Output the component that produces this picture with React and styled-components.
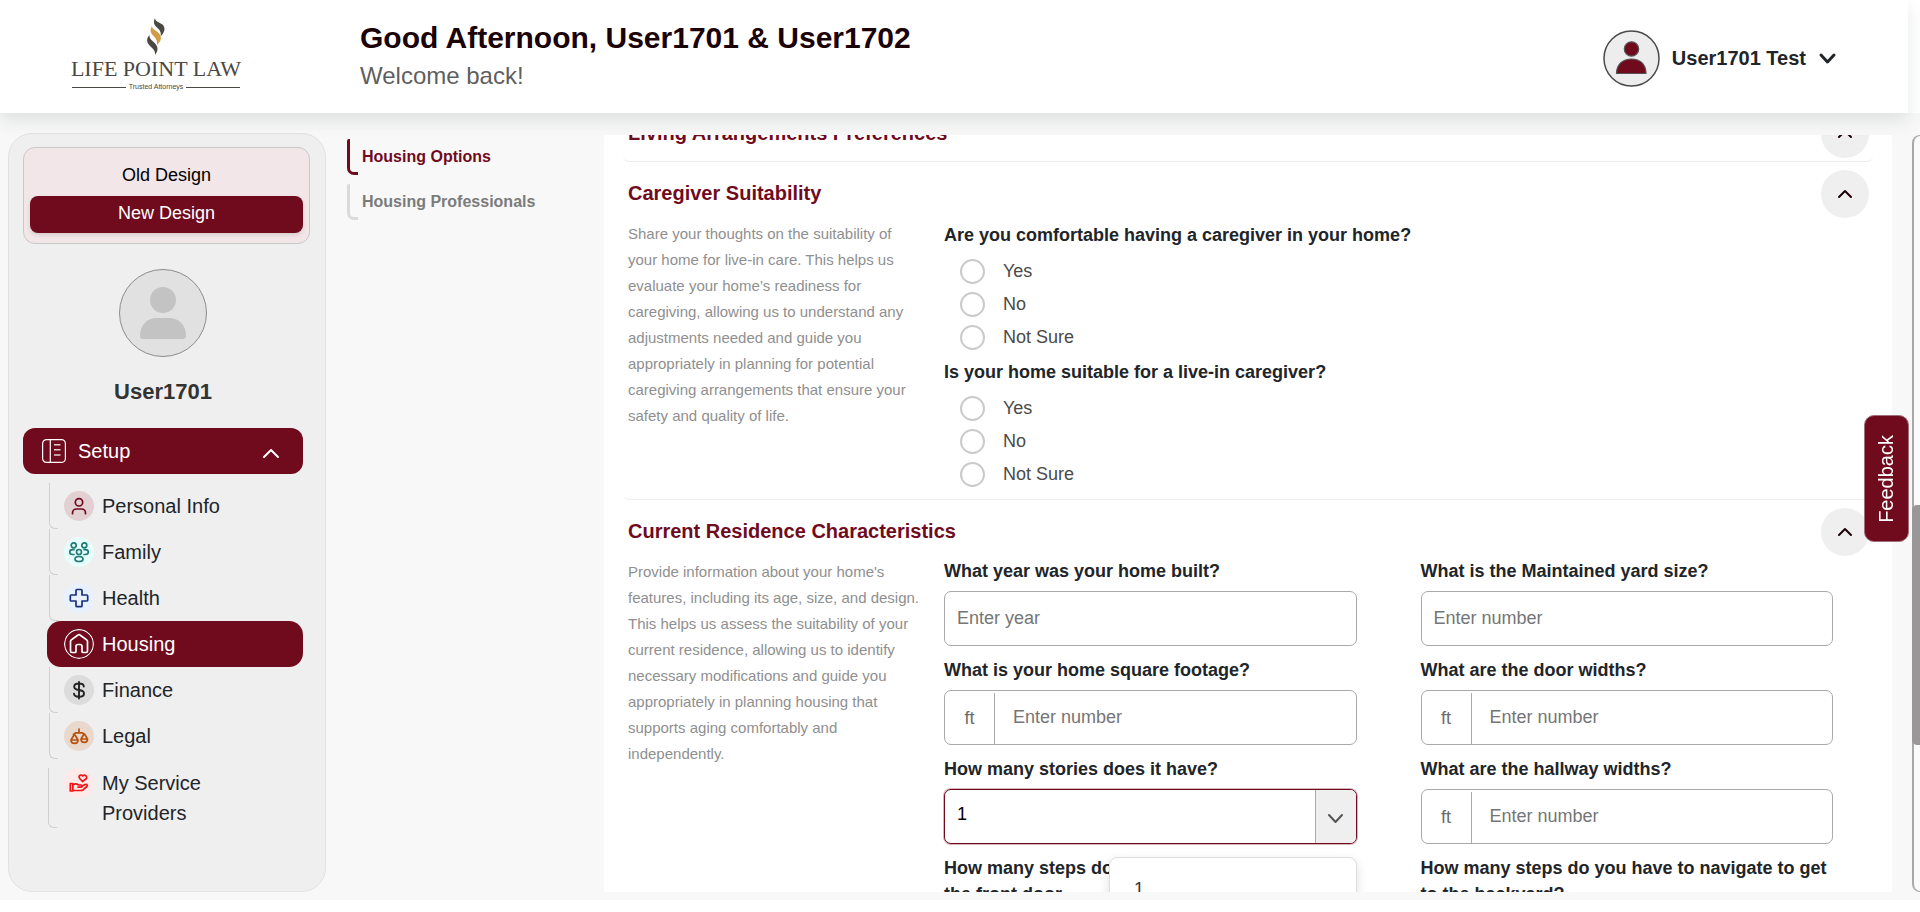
import React, { useState } from "react";
import styled, { createGlobalStyle, css } from "styled-components";

const color = {
  brand: "#700b1e",
  ink: "#212529",
  heading: "#1a0207",
  muted: "#8f8f8f",
  canvas: "#f8f8f8",
  panel: "#efefef",
  line: "#a9a9a9",
};

const GlobalStyle = createGlobalStyle`
  *, *::before, *::after { box-sizing: border-box; }
  body {
    margin: 0;
    background: #fff;
    color: ${color.ink};
    font-family: "Liberation Sans", Arial, sans-serif;
    font-size: 18px;
    overflow: hidden;
  }
  button, input, select { font: inherit; color: inherit; }
  h1, h2, h3, p, ul, fieldset { margin: 0; padding: 0; }
  ul { list-style: none; }
  a { color: inherit; text-decoration: none; }
`;

const Page = styled.div`
  display: flex;
  flex-direction: column;
  height: 100vh;
  padding-bottom: 12px;
`;

/* ---------- header ---------- */

const Header = styled.header`
  position: relative;
  z-index: 1;
  display: flex;
  align-items: center;
  flex: none;
  height: 113px;
  margin-right: 12px;
  padding-right: 71px;
  background: #fff;
  box-shadow: 0 8px 16px rgba(60, 80, 80, 0.13);
`;

const Brand = styled.a`
  display: flex;
  flex-direction: column;
  align-items: center;
  width: 168px;
  margin: 0 120px 4px 72px;
  color: #4b4742;
  font-family: "Liberation Serif", serif;
  font-size: 22px;
  line-height: 22px;
  white-space: nowrap;

  svg { margin-bottom: 3px; }
`;

const Tagline = styled.span`
  display: flex;
  align-items: center;
  gap: 3px;
  width: 100%;
  margin-top: 3px;
  font-family: "Liberation Sans", sans-serif;
  font-size: 7px;
  line-height: 8px;

  &::before,
  &::after {
    content: "";
    flex: 1;
    height: 1px;
    background: #4b4742;
  }
`;

const Greeting = styled.div`
  flex: 1;
  padding-top: 2px;
`;

const GreetingTitle = styled.h1`
  color: ${color.heading};
  font-size: 30px;
  line-height: 36px;
`;

const GreetingText = styled.p`
  color: #5f5f5f;
  font-size: 24px;
  line-height: 40px;
`;

const AccountButton = styled.button`
  display: flex;
  align-items: center;
  gap: 12px;
  padding: 0;
  border: 0;
  background: none;
  font-size: 20px;
  font-weight: 700;
  margin-top: 4px;
`;

/* ---------- body ---------- */

const Shell = styled.div`
  display: flex;
  flex: 1;
  min-height: 0;
  padding: 20px 0 8px 8px;
  background: ${color.canvas};
`;

const Sidebar = styled.aside`
  flex: none;
  width: 318px;
  padding: 13px 15px 0 14px;
  border: 1px solid #e2e2e2;
  border-radius: 24px;
  background: ${color.panel};
`;

const DesignSwitch = styled.div`
  display: flex;
  flex-direction: column;
  padding: 9px 6px 10px;
  border: 1px solid #cbc8c9;
  border-radius: 12px;
  background: #f2e6e8;
`;

const DesignButton = styled.button`
  height: ${(p) => (p.$active ? 37 : 39)}px;
  padding: 0 0 2px;
  border: 0;
  border-radius: 8px;
  background: ${(p) => (p.$active ? color.brand : "none")};
  color: ${(p) => (p.$active ? "#fff" : "#000")};
  box-shadow: ${(p) => (p.$active ? "0 2px 4px rgba(0, 0, 0, 0.12)" : "none")};
`;

const Profile = styled.div`
  display: flex;
  flex-direction: column;
  align-items: center;
  gap: 20px;
  padding: 25px 7px 21px 0;
  color: #333;
`;

const ProfileName = styled.h2`
  font-size: 22px;
  line-height: 30px;
`;

const MenuToggle = styled.button`
  display: flex;
  align-items: center;
  gap: 12px;
  width: calc(100% - 7px);
  height: 46px;
  padding: 0 23px 0 19px;
  border: 0;
  border-radius: 12px;
  background: ${color.brand};
  color: #fff;
  font-size: 20px;

  svg:last-child { margin: 4px 0 0 auto; }
`;

const MenuList = styled.ul`
  padding: 9px 7px 0 24px;
`;

const MenuItem = styled.li`
  display: flex;
  min-height: 46px;
  padding: ${(p) => (p.$tall ? "9px 0 0 1px" : "0 0 0 2px")};
  font-size: 20px;
  line-height: 30px;

  &::before {
    content: "";
    flex: none;
    width: 9px;
    border: solid #d0d0d0;
    border-width: 0 0 1px 1px;
    border-radius: 0 0 0 6px;
  }

  ${(p) =>
    p.$active &&
    css`
      padding-left: 11px;
      border-radius: 14px;
      background: ${color.brand};
      color: #fff;
      &::before { display: none; }
    `}
`;

const MenuLink = styled.a`
  display: flex;
  align-items: flex-start;
  gap: 8px;
  width: ${(p) => (p.$narrow ? "160px" : "auto")};
  padding: ${(p) => (p.$tall ? "0 0 0 7px" : "8px 0 8px 6px")};
`;

const IconBadge = styled.svg`
  flex: none;
  width: 30px;
  height: 30px;
  border-radius: 50%;
  background: ${(p) => p.$bg};
  color: ${(p) => p.$fg};
  fill: none;
  stroke: currentColor;
  stroke-width: 1.7;
  stroke-linecap: round;
  stroke-linejoin: round;
`;

const SubNav = styled.nav`
  display: flex;
  flex-direction: column;
  flex: none;
  gap: 8px;
  width: 257px;
  margin: 6px 0 0 21px;
  font-size: 16px;
  font-weight: 700;
`;

const SubNavLink = styled.a`
  display: flex;
  align-items: center;
  gap: 4px;
  height: 37px;
  padding-bottom: 1px;
  color: ${(p) => (p.$active ? color.brand : "#7b7b7b")};

  &::before {
    content: "";
    align-self: stretch;
    width: 11px;
    border: solid ${(p) => (p.$active ? color.brand : "#dadada")};
    border-width: 0 0 3px 3px;
    border-radius: 2px 0 0 7px;
  }
`;

const Panel = styled.main`
  flex: 1;
  min-width: 0;
  margin: 2px 20px 0 0;
  padding: 0 19px;
  overflow: hidden;
  background: #fff;
`;

/* The panel opens part way down, with the first section mostly passed. */
const PanelScroll = styled.div`
  margin-top: -33px;
`;

const Section = styled.section`
  padding: 8px 4px 3px 5px;
  border-bottom: 1px solid #ececec;
  border-radius: 0 0 6px 6px;
`;

const SectionHeader = styled.div`
  display: flex;
  align-items: center;
  justify-content: space-between;
`;

const SectionTitle = styled.h3`
  padding-bottom: 2px;
  color: ${color.brand};
  font-size: 20px;
  line-height: 24px;
`;

const CollapseButton = styled.button`
  display: grid;
  place-items: center;
  width: 48px;
  height: 48px;
  padding: 0;
  border: 0;
  border-radius: 50%;
  background: ${color.panel};
  color: ${color.heading};
`;

const SectionBody = styled.div`
  display: grid;
  grid-template-columns: 292px 1fr;
  gap: 24px;
  padding: 2px 36px 0 0;
`;

const Description = styled.p`
  padding-top: 1px;
  color: ${color.muted};
  font-size: 15px;
  line-height: 26px;
`;

const QuestionList = styled.div`
  padding-top: 2px;
`;

const Question = styled.fieldset`
  min-width: 0;
  padding-bottom: 5px;
  border: 0;
`;

const Legend = styled.legend`
  padding: 0 0 7px;
  font-weight: 700;
  line-height: 26px;
`;

const RadioLabel = styled.label`
  display: flex;
  align-items: center;
  gap: 18px;
  height: 33px;
  padding-left: 16px;
  color: #4a4a4a;
`;

const Radio = styled.input`
  appearance: none;
  width: 25px;
  height: 25px;
  margin: 0;
  border: 2px solid #cacaca;
  border-radius: 50%;
  background: #fff;

  &:checked { border: 8px solid ${color.brand}; }
`;

const FieldGrid = styled.div`
  display: grid;
  grid-template-columns: 1fr 1fr;
  align-content: start;
  gap: 11px 64px;
`;

const Field = styled.div`
  position: relative;
  display: flex;
  flex-direction: column;
  gap: 7px;
`;

const FieldLabel = styled.label`
  font-weight: 700;
  line-height: 26px;
`;

const Control = styled.div`
  display: flex;
  height: 55px;
  overflow: hidden;
  border: 1px solid ${(p) => (p.$focus ? color.brand : color.line)};
  border-radius: 7px;
  background: #fff;
  box-shadow: ${(p) => (p.$focus ? "0 0 0 1px rgba(112, 11, 30, 0.3)" : "none")};
`;

const Unit = styled.span`
  display: grid;
  place-items: center;
  width: 50px;
  margin-top: 2px;
  border-right: 1px solid ${color.line};
  color: #6c6c6c;
`;

const TextInput = styled.input`
  flex: 1;
  min-width: 0;
  padding: 0 ${(p) => (p.$wide ? 18 : 12)}px;
  border: 0;
  outline: 0;
  background: none;

  &::placeholder { color: #757575; opacity: 1; }
`;

const Select = styled.select`
  flex: 1;
  padding: 0 12px 6px;
  border: 0;
  outline: 0;
  appearance: none;
  background: none;
  color: #000;
`;

const SelectArrow = styled.span`
  display: grid;
  place-items: center;
  width: 41px;
  padding-top: 3px;
  border-left: 1px solid ${color.line};
  background: ${color.panel};
  color: #555;
`;

const OptionMenu = styled.ul`
  position: absolute;
  z-index: 1;
  top: 101px;
  right: 0;
  width: 60%;
  padding: 18px 8px;
  border: 1px solid #dedede;
  border-radius: 8px;
  background: #fff;
  box-shadow: 0 4px 12px rgba(0, 0, 0, 0.12);
`;

const Option = styled.li`
  padding: 0 16px;
  color: #333;
  line-height: 26px;
`;

const ScrollTrack = styled.div`
  display: flex;
  flex: none;
  flex-direction: column;
  width: 8px;
  margin-top: 2px;
  border: solid #a9a9a9;
  border-width: 1px 0 1px 2px;
  border-radius: 8px 0 0 8px;
  background: #fafafa;

  &::before { content: ""; flex: 369; }
  &::after { content: ""; flex: 146; }
`;

const ScrollThumb = styled.div`
  flex: 241;
  margin-left: -2px;
  border-radius: 5px 0 0 5px;
  background: #999797;
`;

const FeedbackButton = styled.button`
  position: fixed;
  z-index: 2;
  right: 11px;
  top: 415px;
  width: 45px;
  height: 127px;
  padding: 0;
  border: 1px solid #a0707a;
  border-radius: 10px;
  background: ${color.brand};
  color: #fff;
  font-size: 20px;

  span {
    display: block;
    margin: 0 auto;
    writing-mode: vertical-rl;
    transform: rotate(180deg);
    line-height: 43px;
  }
`;

/* ---------- drawings ---------- */

const Chevron = ({ up, width, height, stroke = 2 }) => (
  <svg width={width} height={height} viewBox={`0 0 ${width} ${height}`} fill="none" stroke="currentColor"
    strokeWidth={stroke} strokeLinecap="round" strokeLinejoin="round" aria-hidden="true">
    <path d={up
      ? `M${stroke} ${height - stroke}L${width / 2} ${stroke}L${width - stroke} ${height - stroke}`
      : `M${stroke} ${stroke}L${width / 2} ${height - stroke}L${width - stroke} ${stroke}`} />
  </svg>
);

const Flame = () => (
  <svg width="18" height="37" viewBox="0 0 18 37" aria-hidden="true">
    <path fill="#4b4742" d="M8 0c-2 4-1 7 2 9.500c3 2.500 4.500 5 3.500 9c4-4 5.500-8.500 2-12C12 4 8 3.500 8 0z" />
    <path fill="#d09c45" d="M5 8c-2.500 4-1.500 7 1.500 10c3 3 4 5 3.500 9c4.500-4 5-8 2-11.500C9 12 5 11.500 5 8z" />
    <path fill="#4b4742" d="M2.500 17c-3.500 4-3 7.500 .5 11c3.500 3 5.500 5 5 9c3-4 3.500-7.500 .5-11C5.500 22.500 2 21 2.500 17z" />
  </svg>
);

const UserAvatar = () => (
  <svg width="57" height="57" viewBox="0 0 57 57" aria-hidden="true">
    <circle cx="28.500" cy="28.500" r="27.500" fill="#ededed" stroke="#4a4a4a" strokeWidth="1.500" />
    <circle cx="28.500" cy="19" r="7.200" fill={color.brand} stroke="#555" strokeWidth="1.200" />
    <path d="M13.500 43.500C13.500 34 20 29 28.500 29S43 34 43 43.500z" fill={color.brand} stroke="#555" strokeWidth="1.200" />
  </svg>
);

const ProfileAvatar = () => (
  <svg width="88" height="88" viewBox="0 0 88 88" aria-hidden="true">
    <circle cx="44" cy="44" r="43.500" fill="#e1e1e1" stroke="#8c8c8c" />
    <circle cx="44" cy="31" r="13" fill="#c3c3c3" />
    <path d="M21 67c0-11 7-18 17-18h12c10 0 17 7 17 18q0 3-3 3H24q-3 0-3-3z" fill="#c3c3c3" />
  </svg>
);

const SetupIcon = () => (
  <svg width="24" height="24" viewBox="0 0 24 24" fill="none" stroke="#fff" strokeWidth="1.200" aria-hidden="true">
    <rect x=".6" y=".6" width="22.800" height="22.800" rx="4" />
    <path d="M8.300 1v22" />
    <path d="M12 5.700h6.500M12 10.800h6.500M12 15.900h6.500" opacity=".8" strokeWidth="1.500" />
  </svg>
);

const menu = [
  { label: "Personal Info", bg: "#e2d0d3", fg: color.brand, art: (
    <><circle cx="15" cy="11.300" r="3.700" /><path d="M8.500 22.700v-.7a4 4 0 0 1 4-4h5a4 4 0 0 1 4 4v.7" /></>) },
  { label: "Family", bg: "#e6fffb", fg: "#1f7a78", art: (
    <><circle cx="9.700" cy="8.300" r="2.500" /><circle cx="20.300" cy="8.300" r="2.500" /><circle cx="15" cy="15" r="2.500" />
      <ellipse cx="15" cy="22" rx="4" ry="2.500" />
      <path d="M10 12.700H8.500C4.800 12.700 4.800 17.500 8.500 17.500H10M20 12.700h1.500c3.700 0 3.700 4.800 0 4.800H20" /></>) },
  { label: "Health", bg: "#e8f1ff", fg: "#172f7d", art: (
    <path d="M13 6.500h4a1 1 0 0 1 1 1V12h4.700a1 1 0 0 1 1 1v4a1 1 0 0 1-1 1H18v4.700a1 1 0 0 1-1 1h-4a1 1 0 0 1-1-1V18H7.300a1 1 0 0 1-1-1v-4a1 1 0 0 1 1-1H12V7.500a1 1 0 0 1 1-1z" />) },
  { label: "Housing", bg: "transparent", fg: "#fff", active: true, art: (
    <><circle cx="15" cy="15" r="14.400" strokeWidth="1.200" />
      <path d="M8 23.500h3a1 1 0 0 0 1-1v-5a2 2 0 0 1 2-2h2a2 2 0 0 1 2 2v5a1 1 0 0 0 1 1h3a1.500 1.500 0 0 0 1.500-1.500v-9.500a2 2 0 0 0-.8-1.600L16.300 6.200a2 2 0 0 0-2.600 0L7.300 10.900a2 2 0 0 0-.8 1.600V22A1.500 1.500 0 0 0 8 23.500z" /></>) },
  { label: "Finance", bg: "#dcdcdc", fg: "#222", art: (
    <path strokeWidth="1.900" d="M15 7v16.500M19.800 11.500c0-2-1.900-3-4.800-3s-4.800 1-4.800 3.200s2 2.900 4.800 3.300s5 1.100 5 3.400s-2.200 3.400-5 3.400s-5-1.100-5-3.200" />) },
  { label: "Legal", bg: "#e8d8cd", fg: "#b9510f", art: (
    <path d="M15 8v3.500M9.500 13.500l2-1.700h7l2 1.700M10 14l-3 5h7l-3-5zM7 19c0 4.500 7 4.500 7 0M20 13l-3 5h6.500l-3-5zM17 18c0 4.500 6.500 4.500 6.500 0" />) },
  { label: "My Service Providers", bg: "#ffe9e9", fg: "#f01414", tall: true, art: (
    <><path d="M18.500 13.500l-3-3.300c-1.300-2.500 1.800-4.500 3.300-2.200c2-1.800 4.500 0 3.700 2.500z" />
      <path d="M6.300 15.500h2.500v7.500H6.300zM9 17c2-1.500 4-1.200 5.500 0H17c1.500 0 1.500 2.200 0 2.200h-3M17.500 18.500l3.500-2c1.800-.8 3 .7 1.800 2l-3.500 3.200c-1 .7-2 .8-3 .8H9" /></>) },
];

/* ---------- form parts ---------- */

const Collapsible = ({ title, children }) => (
  <Section>
    <SectionHeader>
      <SectionTitle>{title}</SectionTitle>
      <CollapseButton type="button" aria-label={`Collapse ${title}`}>
        <Chevron up width={16} height={10} />
      </CollapseButton>
    </SectionHeader>
    {children}
  </Section>
);

const RadioQuestion = ({ name, text }) => (
  <Question>
    <Legend>{text}</Legend>
    {["Yes", "No", "Not Sure"].map((option) => (
      <RadioLabel key={option}>
        <Radio type="radio" name={name} value={option} />
        {option}
      </RadioLabel>
    ))}
  </Question>
);

const InputField = ({ id, label, placeholder = "Enter number", unit }) => (
  <Field>
    <FieldLabel htmlFor={id}>{label}</FieldLabel>
    <Control>
      {unit && <Unit>{unit}</Unit>}
      <TextInput id={id} placeholder={placeholder} $wide={Boolean(unit)} />
    </Control>
  </Field>
);

const StoriesField = () => {
  const [stories, setStories] = useState("1");
  return (
    <Field>
      <FieldLabel htmlFor="stories">How many stories does it have?</FieldLabel>
      <Control $focus>
        <Select id="stories" value={stories} onChange={(e) => setStories(e.target.value)}>
          <option>1</option>
          <option>2</option>
          <option>3</option>
        </Select>
        <SelectArrow><Chevron width={17} height={11} /></SelectArrow>
      </Control>
      <OptionMenu>
        <Option onClick={() => setStories("1")}>1</Option>
      </OptionMenu>
    </Field>
  );
};

export default function App() {
  return (
    <Page>
      <GlobalStyle />
      <Header>
        <Brand href="#">
          <Flame />
          <span>LIFE POINT LAW</span>
          <Tagline>Trusted Attorneys</Tagline>
        </Brand>
        <Greeting>
          <GreetingTitle>Good Afternoon, User1701 &amp; User1702</GreetingTitle>
          <GreetingText>Welcome back!</GreetingText>
        </Greeting>
        <AccountButton type="button">
          <UserAvatar />
          User1701 Test
          <Chevron width={19} height={13} stroke={3} />
        </AccountButton>
      </Header>

      <Shell>
        <Sidebar>
          <DesignSwitch>
            <DesignButton type="button">Old Design</DesignButton>
            <DesignButton type="button" $active>New Design</DesignButton>
          </DesignSwitch>
          <Profile>
            <ProfileAvatar />
            <ProfileName>User1701</ProfileName>
          </Profile>
          <nav aria-label="Setup">
            <MenuToggle type="button">
              <SetupIcon />
              Setup
              <Chevron up width={18} height={11} />
            </MenuToggle>
            <MenuList>
              {menu.map((item) => (
                <MenuItem key={item.label} $active={item.active} $tall={item.tall}>
                  <MenuLink href="#" $tall={item.tall} $narrow={item.tall}>
                    <IconBadge viewBox="0 0 30 30" $bg={item.bg} $fg={item.fg} aria-hidden="true">
                      {item.art}
                    </IconBadge>
                    {item.label}
                  </MenuLink>
                </MenuItem>
              ))}
            </MenuList>
          </nav>
        </Sidebar>

        <SubNav>
          <SubNavLink href="#" $active>Housing Options</SubNavLink>
          <SubNavLink href="#">Housing Professionals</SubNavLink>
        </SubNav>

        <Panel>
          <PanelScroll>
            <Collapsible title="Living Arrangements Preferences" />
            <Collapsible title="Caregiver Suitability">
              <SectionBody>
                <Description>
                  Share your thoughts on the suitability of your home for live-in care. This helps us
                  evaluate your home’s readiness for caregiving, allowing us to understand any
                  adjustments needed and guide you appropriately in planning for potential caregiving
                  arrangements that ensure your safety and quality of life.
                </Description>
                <QuestionList>
                  <RadioQuestion name="comfortable" text="Are you comfortable having a caregiver in your home?" />
                  <RadioQuestion name="suitable" text="Is your home suitable for a live-in caregiver?" />
                </QuestionList>
              </SectionBody>
            </Collapsible>
            <Collapsible title="Current Residence Characteristics">
              <SectionBody>
                <Description>
                  Provide information about your home's features, including its age, size, and design.
                  This helps us assess the suitability of your current residence, allowing us to
                  identify necessary modifications and guide you appropriately in planning housing that
                  supports aging comfortably and independently.
                </Description>
                <FieldGrid>
                  <InputField id="year" label="What year was your home built?" placeholder="Enter year" />
                  <InputField id="yard" label="What is the Maintained yard size?" />
                  <InputField id="footage" label="What is your home square footage?" unit="ft" />
                  <InputField id="doors" label="What are the door widths?" unit="ft" />
                  <StoriesField />
                  <InputField id="hallways" label="What are the hallway widths?" unit="ft" />
                  <InputField id="front-steps" label="How many steps do you have to navigate up to the front door" />
                  <InputField id="back-steps" label="How many steps do you have to navigate to get to the backyard?" />
                </FieldGrid>
              </SectionBody>
            </Collapsible>
          </PanelScroll>
        </Panel>
        <ScrollTrack aria-hidden="true"><ScrollThumb /></ScrollTrack>
      </Shell>
      <FeedbackButton type="button"><span>Feedback</span></FeedbackButton>
    </Page>
  );
}
